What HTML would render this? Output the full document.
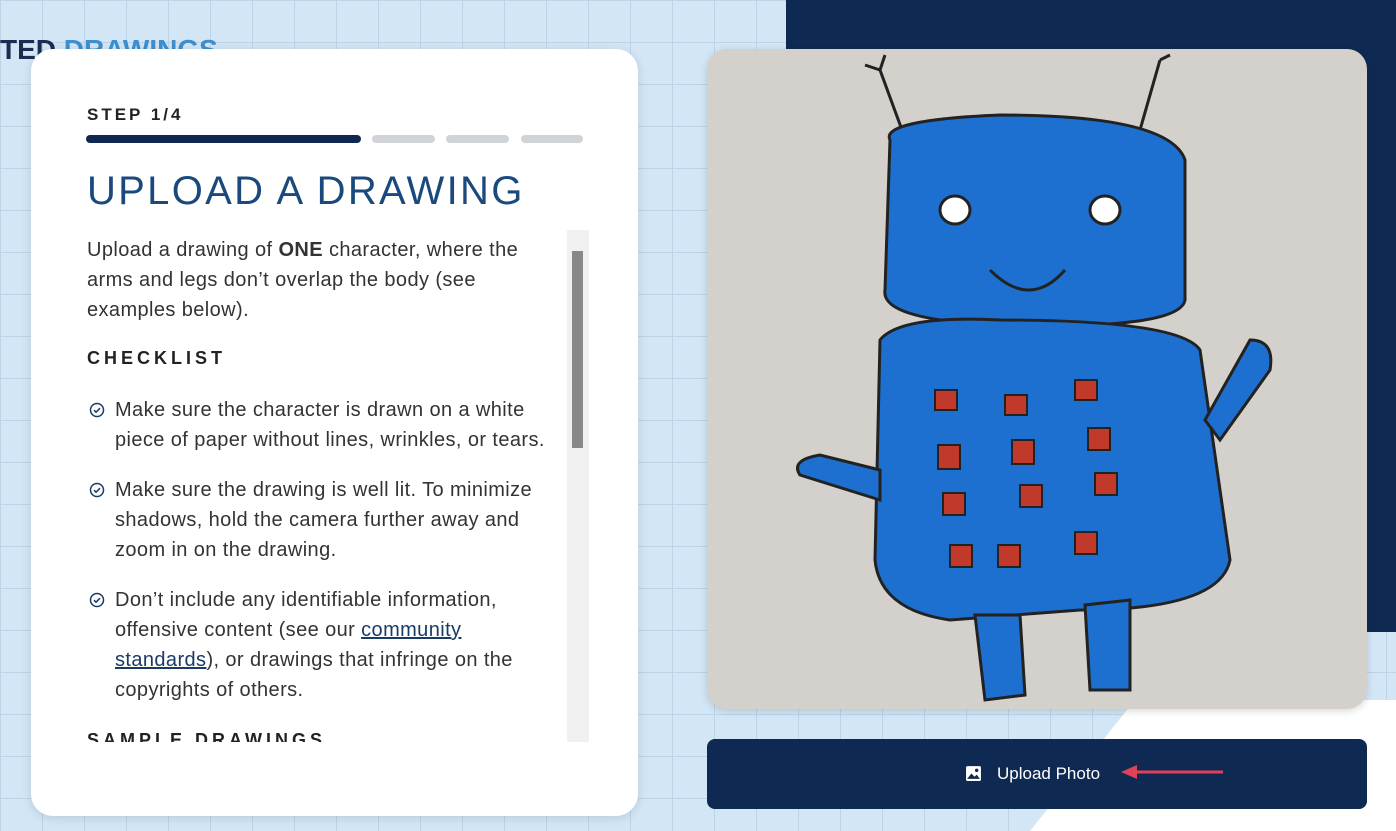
<!DOCTYPE html>
<html><head><style>
body{margin:0;width:1396px;height:831px;overflow:hidden;position:relative;font-family:"Liberation Sans",sans-serif;
background-color:#d3e6f6;
background-image:linear-gradient(#bcd3e8 1px,transparent 1px),linear-gradient(90deg,#bcd3e8 1px,transparent 1px);background-size:42px 42px;}
.navy{position:absolute;left:786px;top:0;width:610px;height:632px;background:#0f2a52}
.white{position:absolute;left:0;top:0;width:1396px;height:831px;background:#fff;clip-path:polygon(1135px 700px,1396px 700px,1396px 831px,1030px 831px)}
.title{position:absolute;left:0;top:34px;font-size:28px;font-weight:bold;color:#1a2c50}
.title span{color:#3d8fcf}
.card{position:absolute;left:31px;top:49px;width:607px;height:767px;background:#fff;border-radius:22px;box-shadow:0 2px 10px rgba(0,0,0,.12)}
.step{position:absolute;left:56px;top:56px;font-size:17px;font-weight:bold;letter-spacing:3px;color:#222}
.bar{position:absolute;top:86px;height:8px;border-radius:4px;background:#d0d3d8}
h1{position:absolute;left:56px;top:120px;margin:0;font-size:40px;font-weight:normal;color:#1a4a7d;letter-spacing:2.3px;font-family:"Liberation Sans",sans-serif}
.scroll{position:absolute;left:56px;top:186px;width:490px;height:507px;overflow:hidden;font-size:20px;letter-spacing:0.4px;line-height:30px;color:#333;white-space:nowrap}
.scroll p{margin:0}
h3{margin:18px 0 22px;font-size:18px;line-height:30px;letter-spacing:4px;color:#222}
.item{position:relative;padding-left:28px;margin-bottom:20px}
.item svg{position:absolute;left:2px;top:7px}
a{color:#1a3a66}
.track{position:absolute;left:536px;top:181px;width:22px;height:512px;background:#f0f0f0}
.thumb{position:absolute;left:541px;top:202px;width:11px;height:197px;background:#888}
.photo{position:absolute;left:707px;top:49px;width:660px;height:660px;border-radius:20px;background:#d4d0cc;overflow:hidden;box-shadow:0 2px 8px rgba(0,0,0,.15)}
.btn{position:absolute;left:707px;top:739px;width:660px;height:70px;border-radius:8px;background:#0f2a52;color:#fff;font-size:17px}
</style></head><body>
<div class="navy"></div><div class="white"></div>
<div class="title">TED <span>DRAWINGS</span></div>
<div class="card">
<div class="step">STEP 1/4</div>
<div class="bar" style="left:55px;width:275px;background:#10284f"></div>
<div class="bar" style="left:341px;width:63px"></div>
<div class="bar" style="left:415px;width:63px"></div>
<div class="bar" style="left:490px;width:62px"></div>
<h1>UPLOAD A DRAWING</h1>
<div class="scroll">
<p>Upload a drawing of <b>ONE</b> character, where the<br>arms and legs don’t overlap the body (see<br>examples below).</p>
<h3>CHECKLIST</h3>
<div class="item"><svg width="16" height="16" viewBox="0 0 16 16"><circle cx="8" cy="8" r="6.5" fill="none" stroke="#1a3a66" stroke-width="1.5"/><path d="M5 8.2l2 2 4-4" fill="none" stroke="#1a3a66" stroke-width="1.5"/></svg>Make sure the character is drawn on a white<br>piece of paper without lines, wrinkles, or tears.</div>
<div class="item"><svg width="16" height="16" viewBox="0 0 16 16"><circle cx="8" cy="8" r="6.5" fill="none" stroke="#1a3a66" stroke-width="1.5"/><path d="M5 8.2l2 2 4-4" fill="none" stroke="#1a3a66" stroke-width="1.5"/></svg>Make sure the drawing is well lit. To minimize<br>shadows, hold the camera further away and<br>zoom in on the drawing.</div>
<div class="item"><svg width="16" height="16" viewBox="0 0 16 16"><circle cx="8" cy="8" r="6.5" fill="none" stroke="#1a3a66" stroke-width="1.5"/><path d="M5 8.2l2 2 4-4" fill="none" stroke="#1a3a66" stroke-width="1.5"/></svg>Don’t include any identifiable information,<br>offensive content (see our <a href="#">community</a><br><a href="#">standards</a>), or drawings that infringe on the<br>copyrights of others.</div>
<h3>SAMPLE DRAWINGS</h3>
</div>
<div class="track"></div><div class="thumb"></div>
</div>
<div class="photo"><svg width="660" height="660" viewBox="707 49 660 660">
<g stroke="#222" stroke-width="3" fill="none"><path d="M902 130 L880 70 M880 70l-15 -5 M880 70l5-15 M1140 130 L1160 60 M1160 60l10-5"/></g>
<path d="M890 140 Q880 120 1000 115 Q1170 115 1185 160 L1185 300 Q1180 330 1000 325 Q880 320 885 290 Z" fill="#1d6fd0" stroke="#222" stroke-width="3"/>
<path d="M880 340 Q900 315 1000 320 Q1180 320 1200 350 L1230 560 Q1220 610 1080 610 L950 620 Q880 610 875 560 Z" fill="#1d6fd0" stroke="#222" stroke-width="3"/>
<path d="M880 470 L820 455 Q790 460 800 475 L880 500Z M1205 420 L1250 340 Q1275 340 1270 370 L1220 440Z" fill="#1d6fd0" stroke="#222" stroke-width="3"/>
<path d="M975 615 L985 700 L1025 695 L1020 615Z M1085 605 L1090 690 L1130 690 L1130 600Z" fill="#1d6fd0" stroke="#222" stroke-width="3"/>
<ellipse cx="955" cy="210" rx="15" ry="14" fill="#fff" stroke="#222" stroke-width="3"/><ellipse cx="1105" cy="210" rx="15" ry="14" fill="#fff" stroke="#222" stroke-width="3"/>
<path d="M990 270 Q1030 310 1065 270" stroke="#222" stroke-width="3" fill="none"/>
<g fill="#c0392b" stroke="#222" stroke-width="2"><rect x="935" y="390" width="22" height="20"/><rect x="1005" y="395" width="22" height="20"/><rect x="1075" y="380" width="22" height="20"/><rect x="938" y="445" width="22" height="24"/><rect x="1012" y="440" width="22" height="24"/><rect x="1088" y="428" width="22" height="22"/><rect x="943" y="493" width="22" height="22"/><rect x="1020" y="485" width="22" height="22"/><rect x="1095" y="473" width="22" height="22"/><rect x="950" y="545" width="22" height="22"/><rect x="998" y="545" width="22" height="22"/><rect x="1075" y="532" width="22" height="22"/></g>
</svg></div>
<div class="btn">
<svg style="position:absolute;left:258px;top:26px" width="17" height="17" viewBox="0 0 16 16"><rect x="1" y="1" width="14" height="14" rx="1.5" fill="#fff"/><path d="M2 13l4-5 3 3 2-2 3 4z" fill="#0f2a52"/><circle cx="11" cy="5" r="1.6" fill="#0f2a52"/></svg>
<span style="position:absolute;left:290px;top:25px">Upload Photo</span>
<svg style="position:absolute;left:412px;top:24px" width="106" height="18"><path d="M14 9H104" stroke="#e0405a" stroke-width="3"/><path d="M2 9l16-7v14z" fill="#e0405a"/></svg>
</div>
</body></html>
